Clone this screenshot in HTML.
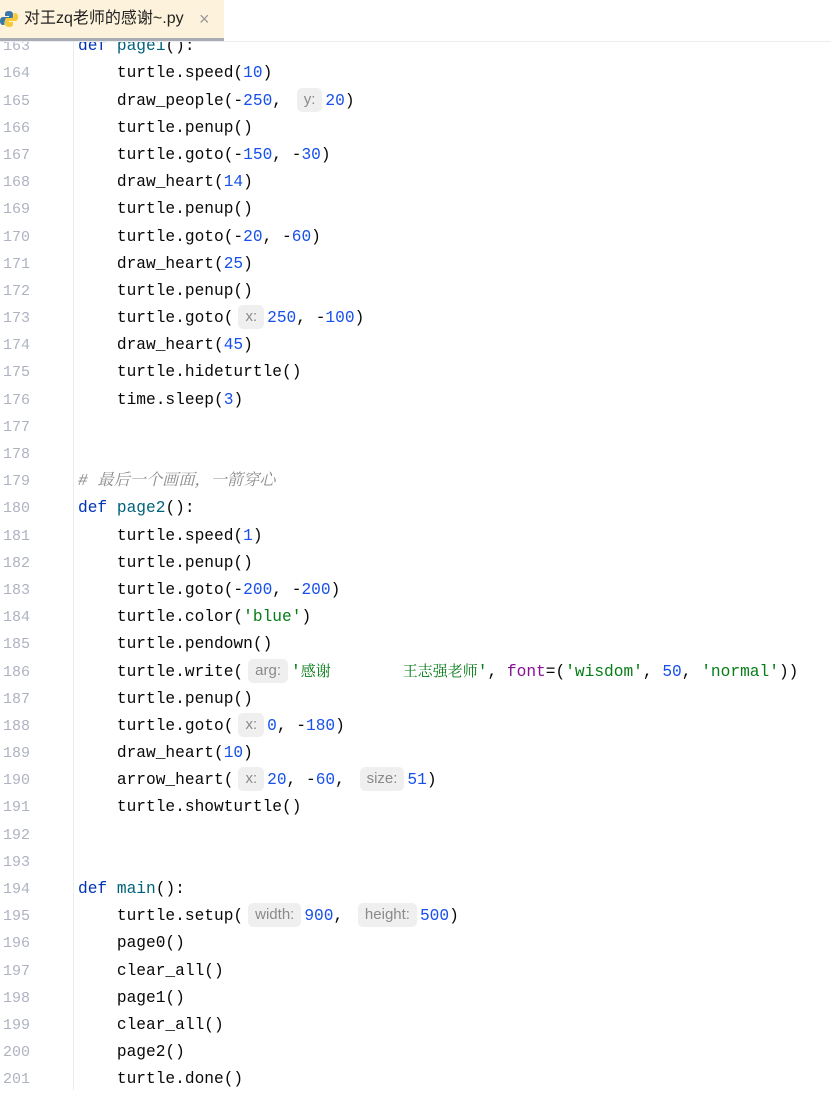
<!DOCTYPE html>
<html><head><meta charset="utf-8"><style>
body{margin:0;width:831px;height:1090px;background:#fff;overflow:hidden;position:relative;font-family:"Liberation Mono",monospace}
#tabs{position:absolute;left:0;top:0;width:831px;height:41px;background:#fff;border-bottom:1px solid #ebecf0;z-index:2}
#tab{position:absolute;left:0;top:0;width:224px;height:38px;background:#fdf3dc;border-bottom:3px solid #a9acb4;font-family:"Liberation Sans","Noto Sans CJK SC",sans-serif;font-size:16px;color:#222;line-height:38px}
#tab .t{position:absolute;left:24px;top:0}
#tab .x{position:absolute;left:199px;top:0;color:#999;font-size:18px}
#gut{position:absolute;left:73px;top:0;width:1px;height:1090px;background:#ebecf0}
#code{position:absolute;left:0;top:33.2px;width:831px}
.l{height:27.19px;line-height:27.19px;position:relative;white-space:pre;font-size:16.2px;color:#080808}
.n{position:absolute;left:0;width:30px;text-align:right;color:#aeb3c2;font-size:15px}
.c{position:absolute;left:78px}
.k{color:#0033b3}.f{color:#00627a}.d{color:#1750eb}.s{color:#067d17}.p{color:#871094}
.cm{color:#8c8c8c;font-style:italic;font-family:"Liberation Mono","Noto Serif CJK SC",monospace}
.cj{font-family:"Liberation Mono","Noto Serif CJK SC",monospace;font-size:15px}
.h{display:inline-block;background:#efefef;border-radius:5px;color:#8a8a8a;font-family:"Liberation Sans",sans-serif;font-size:15px;line-height:24px;padding:0 7px;margin:0 3px 0 5px;vertical-align:1px}
</style></head><body>
<div id="tabs"><div id="tab">
<svg style="position:absolute;left:0;top:10px" width="18" height="18" viewBox="0 0 18 18"><path d="M9 1C5 1 5 3 5 4v2h4v1H3C1 7 0 8.5 0 11s1 4 3 4h1.5v-2.5C4.5 11 5.5 10 7 10h4c1.2 0 2-.9 2-2V4c0-1.5-1.5-3-4-3z" fill="#3b77a8"/><path d="M9 17c4 0 4-2 4-3v-2H9v-1h6c2 0 3-1.5 3-4s-1-4-3-4h-1.5v2.5c0 1.5-1 2.5-2.5 2.5H7c-1.2 0-2 .9-2 2v4c0 1.5 1.5 3 4 3z" fill="#f5c93a"/></svg>
<span class="t">对王zq老师的感谢~.py</span><span class="x">×</span></div></div>
<div id="gut"></div>
<div id="code">
<div class="l"><span class="n">163</span><span class="c"><span class="k">def</span> <span class="f">page1</span>():</span></div>
<div class="l"><span class="n">164</span><span class="c">    turtle.speed(<span class="d">10</span>)</span></div>
<div class="l"><span class="n">165</span><span class="c">    draw_people(-<span class="d">250</span>, <span class="h">y:</span><span class="d">20</span>)</span></div>
<div class="l"><span class="n">166</span><span class="c">    turtle.penup()</span></div>
<div class="l"><span class="n">167</span><span class="c">    turtle.goto(-<span class="d">150</span>, -<span class="d">30</span>)</span></div>
<div class="l"><span class="n">168</span><span class="c">    draw_heart(<span class="d">14</span>)</span></div>
<div class="l"><span class="n">169</span><span class="c">    turtle.penup()</span></div>
<div class="l"><span class="n">170</span><span class="c">    turtle.goto(-<span class="d">20</span>, -<span class="d">60</span>)</span></div>
<div class="l"><span class="n">171</span><span class="c">    draw_heart(<span class="d">25</span>)</span></div>
<div class="l"><span class="n">172</span><span class="c">    turtle.penup()</span></div>
<div class="l"><span class="n">173</span><span class="c">    turtle.goto(<span class="h">x:</span><span class="d">250</span>, -<span class="d">100</span>)</span></div>
<div class="l"><span class="n">174</span><span class="c">    draw_heart(<span class="d">45</span>)</span></div>
<div class="l"><span class="n">175</span><span class="c">    turtle.hideturtle()</span></div>
<div class="l"><span class="n">176</span><span class="c">    time.sleep(<span class="d">3</span>)</span></div>
<div class="l"><span class="n">177</span></div>
<div class="l"><span class="n">178</span></div>
<div class="l"><span class="n">179</span><span class="c cm"># 最后一个画面，一箭穿心</span></div>
<div class="l"><span class="n">180</span><span class="c"><span class="k">def</span> <span class="f">page2</span>():</span></div>
<div class="l"><span class="n">181</span><span class="c">    turtle.speed(<span class="d">1</span>)</span></div>
<div class="l"><span class="n">182</span><span class="c">    turtle.penup()</span></div>
<div class="l"><span class="n">183</span><span class="c">    turtle.goto(-<span class="d">200</span>, -<span class="d">200</span>)</span></div>
<div class="l"><span class="n">184</span><span class="c">    turtle.color(<span class="s">'blue'</span>)</span></div>
<div class="l"><span class="n">185</span><span class="c">    turtle.pendown()</span></div>
<div class="l"><span class="n">186</span><span class="c">    turtle.write(<span class="h">arg:</span><span class="s">'<span class="cj">感谢        王志强老师</span>'</span>, <span class="p">font</span>=(<span class="s">'wisdom'</span>, <span class="d">50</span>, <span class="s">'normal'</span>))</span></div>
<div class="l"><span class="n">187</span><span class="c">    turtle.penup()</span></div>
<div class="l"><span class="n">188</span><span class="c">    turtle.goto(<span class="h">x:</span><span class="d">0</span>, -<span class="d">180</span>)</span></div>
<div class="l"><span class="n">189</span><span class="c">    draw_heart(<span class="d">10</span>)</span></div>
<div class="l"><span class="n">190</span><span class="c">    arrow_heart(<span class="h">x:</span><span class="d">20</span>, -<span class="d">60</span>, <span class="h">size:</span><span class="d">51</span>)</span></div>
<div class="l"><span class="n">191</span><span class="c">    turtle.showturtle()</span></div>
<div class="l"><span class="n">192</span></div>
<div class="l"><span class="n">193</span></div>
<div class="l"><span class="n">194</span><span class="c"><span class="k">def</span> <span class="f">main</span>():</span></div>
<div class="l"><span class="n">195</span><span class="c">    turtle.setup(<span class="h">width:</span><span class="d">900</span>, <span class="h">height:</span><span class="d">500</span>)</span></div>
<div class="l"><span class="n">196</span><span class="c">    page0()</span></div>
<div class="l"><span class="n">197</span><span class="c">    clear_all()</span></div>
<div class="l"><span class="n">198</span><span class="c">    page1()</span></div>
<div class="l"><span class="n">199</span><span class="c">    clear_all()</span></div>
<div class="l"><span class="n">200</span><span class="c">    page2()</span></div>
<div class="l"><span class="n">201</span><span class="c">    turtle.done()</span></div>
</div>
</body></html>
